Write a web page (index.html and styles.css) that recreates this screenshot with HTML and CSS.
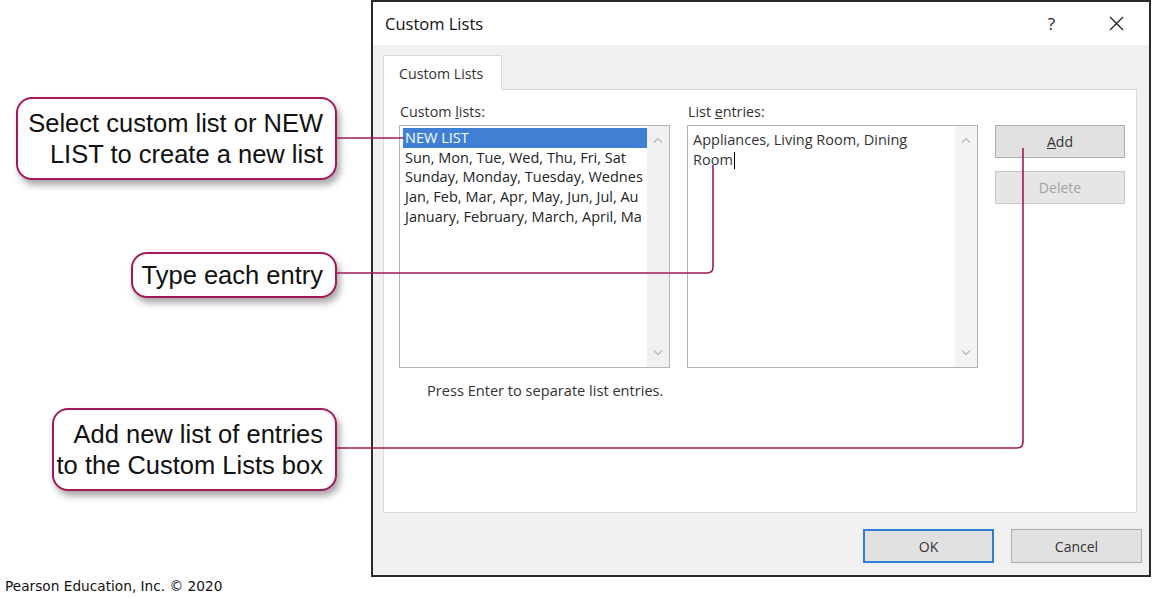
FILE: index.html
```html
<!DOCTYPE html>
<html>
<head>
<meta charset="utf-8">
<link rel="stylesheet" href="styles.css">
</head>
<body>
<div class="page">
  <div class="stage">
    <div class="callouts">
      <div class="callout c1">Select custom list or NEW<br>LIST to create a new list</div>
      <div class="callout c2">Type each entry</div>
      <div class="callout c3">Add new list of entries<br>to the Custom Lists box</div>
    </div>
    <div class="dialog">
      <div class="titlebar">
        <span class="title">Custom Lists</span>
        <span class="help">?</span>
        <span class="close">
          <svg width="15" height="15" viewBox="0 0 15 15"><path d="M1 1 L14 14 M14 1 L1 14" stroke="#222" stroke-width="1.3" fill="none"/></svg>
        </span>
      </div>
      <div class="dlg-body">
        <div class="tabs"><div class="tab">Custom Lists</div></div>
        <div class="panel">
          <div class="grid">
            <div class="label">Custom <u>l</u>ists:</div>
            <div class="label">List <u>e</u>ntries:</div>
            <div></div>
            <div class="box listbox">
              <div class="items">
                <div class="item sel">NEW LIST</div>
                <div class="item">Sun, Mon, Tue, Wed, Thu, Fri, Sat</div>
                <div class="item">Sunday, Monday, Tuesday, Wednes</div>
                <div class="item">Jan, Feb, Mar, Apr, May, Jun, Jul, Au</div>
                <div class="item">January, February, March, April, Ma</div>
              </div>
              <div class="scroll">
                <svg width="10" height="6" viewBox="0 0 10 6"><path d="M1 5.5 L5 1.5 L9 5.5" stroke="#b5b5b5" stroke-width="1.2" fill="none"/></svg>
                <svg width="10" height="6" viewBox="0 0 10 6"><path d="M1 0.5 L5 4.5 L9 0.5" stroke="#b5b5b5" stroke-width="1.2" fill="none"/></svg>
              </div>
            </div>
            <div class="box entries">
              <div class="entry-text">Appliances, Living Room, Dining<br>Room<span class="caret"></span></div>
              <div class="scroll">
                <svg width="10" height="6" viewBox="0 0 10 6"><path d="M1 5.5 L5 1.5 L9 5.5" stroke="#b5b5b5" stroke-width="1.2" fill="none"/></svg>
                <svg width="10" height="6" viewBox="0 0 10 6"><path d="M1 0.5 L5 4.5 L9 0.5" stroke="#b5b5b5" stroke-width="1.2" fill="none"/></svg>
              </div>
            </div>
            <div class="side-buttons">
              <div class="btn"><u>A</u>dd</div>
              <div class="btn disabled">Delete</div>
            </div>
            <div class="hint">Press Enter to separate list entries.</div>
          </div>
        </div>
        <div class="footer">
          <div class="btn big ok">OK</div>
          <div class="btn big">Cancel</div>
        </div>
      </div>
    </div>
    <svg class="connectors" width="1152" height="577" viewBox="0 0 1152 577">
      <path d="M337 138 H404" />
      <path d="M337 273 H707 Q713 273 713 267 V165" />
      <path d="M337 448 H1017 Q1023 448 1023 442 V148" />
    </svg>
  </div>
  <div class="credit">Pearson Education, Inc. © 2020</div>
</div>
</body>
</html>
```
FILE: styles.css
```css
html, body {
  margin: 0;
  padding: 0;
  background: #fff;
}
.page {
  width: 1152px;
  height: 598px;
  overflow: hidden;
}
.stage {
  position: relative;
  display: flex;
  height: 577px;
}
.callouts {
  width: 371px;
  flex: none;
  display: flex;
  flex-direction: column;
  align-items: flex-end;
  padding-right: 34px;
  box-sizing: border-box;
}
.callout {
  box-sizing: border-box;
  border: 2px solid #a3195b;
  border-radius: 16px;
  background: #fff;
  box-shadow: 3px 5px 7px rgba(0, 0, 0, 0.35);
  font-family: "Liberation Sans", Arial, sans-serif;
  font-size: 25.5px;
  line-height: 31px;
  color: #111;
  text-align: right;
  padding-right: 12px;
  display: flex;
  flex-direction: column;
  justify-content: center;
  align-items: flex-end;
  white-space: nowrap;
}
.c1 { margin-top: 97px; width: 321px; height: 83px; }
.c2 { margin-top: 72px; width: 206px; height: 46px; }
.c3 { margin-top: 110px; width: 285px; height: 83px; }

.dialog {
  width: 780px;
  height: 577px;
  box-sizing: border-box;
  border: 2px solid #2a2a2a;
  display: flex;
  flex-direction: column;
  font-family: "Open Sans", "Noto Sans", sans-serif;
  color: #222;
}
.titlebar {
  height: 43px;
  flex: none;
  background: #fff;
  display: flex;
  align-items: center;
  padding-left: 12px;
}
.title {
  font-size: 16.5px;
  color: #111;
  flex: 1;
}
.help {
  font-size: 17px;
  color: #222;
  margin-right: 54px;
}
.close {
  display: flex;
  margin-right: 25px;
}
.dlg-body {
  flex: 1;
  background: #f0f0f0;
  padding: 10px 12px 0 10px;
  display: flex;
  flex-direction: column;
}
.tabs {
  display: flex;
  position: relative;
  z-index: 1;
  margin-bottom: -1px;
}
.tab {
  width: 119px;
  height: 35px;
  box-sizing: border-box;
  border: 1px solid #d9d9d9;
  border-bottom: none;
  background: #fff;
  font-size: 14.2px;
  padding-left: 15px;
  line-height: 36px;
  color: #333;
}
.panel {
  height: 424px;
  box-sizing: border-box;
  border: 1px solid #d9d9d9;
  background: #fff;
  padding: 13px 0 0 15px;
}
.grid {
  display: grid;
  grid-template-columns: 271px 291px 130px;
  grid-template-rows: 22px 243px auto;
  column-gap: 17px;
}
.label {
  font-size: 14.3px;
  line-height: 18px;
  color: #333;
  padding-left: 1px;
}
.box {
  box-sizing: border-box;
  border: 1px solid #b4b4b4;
  background: #fff;
  display: flex;
  overflow: hidden;
}
.items {
  flex: 1;
  min-width: 0;
  padding: 2px 0 0 3px;
  overflow: hidden;
}
.item {
  font-size: 14.5px;
  line-height: 19.7px;
  height: 19.7px;
  white-space: nowrap;
  overflow: hidden;
  padding-left: 2px;
  color: #222;
}
.item.sel {
  background: #3f80d5;
  color: #fff;
}
.scroll {
  width: 22px;
  flex: none;
  background: #f0f0f0;
  display: flex;
  flex-direction: column;
  justify-content: space-between;
  align-items: center;
  padding: 11px 0 11px;
  box-sizing: border-box;
}
.entries .scroll {
  background: #f3f3f3;
}
.entry-text {
  flex: 1;
  font-size: 14.5px;
  line-height: 20px;
  padding: 4px 0 0 5px;
  color: #333;
}
.caret {
  display: inline-block;
  width: 1px;
  height: 17px;
  background: #000;
  vertical-align: -4px;
  margin-left: 1px;
}
.side-buttons {
  display: flex;
  flex-direction: column;
  gap: 13px;
}
.btn {
  box-sizing: border-box;
  height: 33px;
  border: 1px solid #adadad;
  background: #e1e1e1;
  font-size: 14px;
  color: #333;
  display: flex;
  align-items: center;
  justify-content: center;
}
.btn.disabled {
  border-color: #c8c8c8;
  background: #e6e6e6;
  color: #a3a3a3;
}
.hint {
  grid-column: 1 / 3;
  font-size: 14.6px;
  line-height: 18px;
  color: #333;
  padding-left: 28px;
  margin-top: 13px;
}
.footer {
  display: flex;
  justify-content: flex-end;
  gap: 17px;
  margin-top: 16px;
  margin-right: -5px;
}
.btn.big {
  width: 131px;
  height: 34px;
}
.btn.ok {
  border: 2px solid #2f7fd0;
}
.connectors {
  position: absolute;
  left: 0;
  top: 0;
  pointer-events: none;
}
.connectors path {
  fill: none;
  stroke: #a3195b;
  stroke-width: 1.6;
}
.credit {
  font-family: "DejaVu Sans", Verdana, sans-serif;
  font-size: 13.7px;
  line-height: 16px;
  margin: 1px 0 0 5px;
  color: #111;
}
```
